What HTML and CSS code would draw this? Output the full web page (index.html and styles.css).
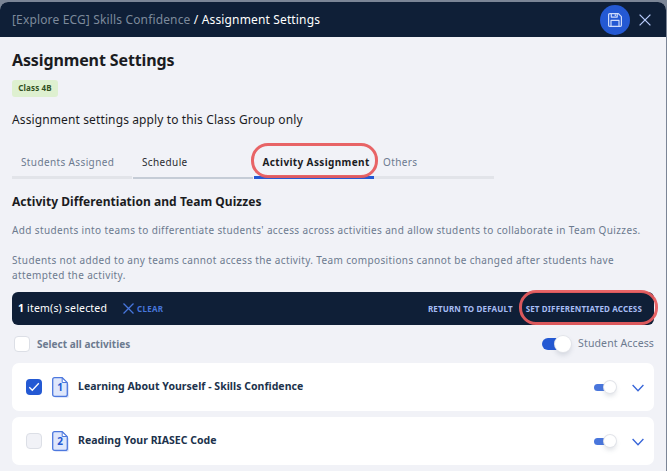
FILE: index.html
```html
<!DOCTYPE html>
<html lang="en">
<head>
<meta charset="utf-8">
<title>Assignment Settings</title>
<link rel="stylesheet" href="styles.css">
</head>
<body>
<div class="modal">
  <header class="topbar">
    <div class="crumbs"><span class="crumb-parent">[Explore ECG] Skills Confidence</span> / Assignment Settings</div>
    <button class="save" aria-label="Save">
      <svg width="14" height="14" viewBox="0 0 14 14" fill="none" stroke="#cfdcfb" stroke-width="1.2" stroke-linejoin="round"><path d="M1.8.6H10.4L13.4 3.6V12.2Q13.4 13.4 12.2 13.4H1.8Q.6 13.4.6 12.2V1.8Q.6.6 1.8.6Z"/><path d="M3.3.8V4.1H9.2V.8M7.3 1.2V3M3 13.2V7.4H11V13.2"/></svg>
    </button>
    <button class="close" aria-label="Close">
      <svg width="12" height="12" viewBox="0 0 12 12" fill="none" stroke="#b3c6f7" stroke-width="1.3"><path d="M.6.6 11.4 11.4M11.4.6.6 11.4"/></svg>
    </button>
  </header>
  <main class="content">
    <h1 class="title">Assignment Settings</h1>
    <span class="badge">Class 4B</span>
    <p class="scope">Assignment settings apply to this Class Group only</p>
    <nav class="tabs">
      <a class="tab tab-students">Students Assigned</a>
      <a class="tab tab-hover">Schedule</a>
      <a class="tab tab-active">Activity Assignment<span class="ring ring-tab"></span></a>
      <a class="tab tab-others">Others</a>
    </nav>
    <h2 class="subtitle">Activity Differentiation and Team Quizzes</h2>
    <p class="note note-first">Add students into teams to differentiate students' access across activities and allow students to collaborate in Team Quizzes.</p>
    <p class="note note-second">Students not added to any teams cannot access the activity. Team compositions cannot be changed after students have<br>attempted the activity.</p>
    <div class="selection">
      <span class="count"><b>1</b> item(s) selected</span>
      <svg class="clear-icon" width="11" height="11" viewBox="0 0 11 11" fill="none" stroke="#4776dc" stroke-width="1.3"><path d="M.5.5 10.5 10.5M10.5.5.5 10.5"/></svg>
      <span class="clear">CLEAR</span>
      <span class="action action-return">RETURN TO DEFAULT</span>
      <span class="action action-access">SET DIFFERENTIATED ACCESS<span class="ring ring-access"></span></span>
    </div>
    <div class="select-all">
      <span class="check check-empty"></span>
      <span class="select-label">Select all activities</span>
      <span class="toggle toggle-large"></span>
      <span class="access-label">Student Access</span>
    </div>
    <section class="card">
      <span class="check check-on"><svg width="16" height="16" viewBox="0 0 16 16" fill="none" stroke="#fff" stroke-width="1.3"><path d="M3.3 8.2 6.3 11.2 12.8 4.3"/></svg></span>
      <svg class="doc" width="17" height="21" viewBox="0 0 17 21"><rect x="2" y="6" width="15" height="15" rx="2.5" fill="#dfe6fa"/><path d="M2.6.7H10.2L15.3 5.8V17.4Q15.3 19.4 13.3 19.4H2.6Q.7 19.4.7 17.4V2.6Q.7.7 2.6.7Z" fill="#dfe7fb" stroke="#4d78de" stroke-width="1.3"/><path d="M10.2 1V5.5H15Z" fill="#fff" stroke="#4d78de" stroke-width="1"/><text x="8" y="14.2" text-anchor="middle" class="doc-number">1</text></svg>
      <span class="card-title card-title-first">Learning About Yourself - Skills Confidence</span>
      <span class="toggle toggle-small"></span>
      <svg class="chevron" width="12" height="8" viewBox="0 0 12 8" fill="none" stroke="#3664d8" stroke-width="1.3"><path d="M.6 1 6 6.8 11.4 1"/></svg>
    </section>
    <section class="card">
      <span class="check check-disabled"></span>
      <svg class="doc" width="17" height="21" viewBox="0 0 17 21"><rect x="2" y="6" width="15" height="15" rx="2.5" fill="#dfe6fa"/><path d="M2.6.7H10.2L15.3 5.8V17.4Q15.3 19.4 13.3 19.4H2.6Q.7 19.4.7 17.4V2.6Q.7.7 2.6.7Z" fill="#dfe7fb" stroke="#4d78de" stroke-width="1.3"/><path d="M10.2 1V5.5H15Z" fill="#fff" stroke="#4d78de" stroke-width="1"/><text x="8" y="14.2" text-anchor="middle" class="doc-number">2</text></svg>
      <span class="card-title card-title-second">Reading Your RIASEC Code</span>
      <span class="toggle toggle-small"></span>
      <svg class="chevron" width="12" height="8" viewBox="0 0 12 8" fill="none" stroke="#3664d8" stroke-width="1.3"><path d="M.6 1 6 6.8 11.4 1"/></svg>
    </section>
  </main>
</div>
</body>
</html>
```
FILE: styles.css
```css
* { box-sizing: border-box; }
body {
  margin: 0;
  height: 471px;
  overflow: hidden;
  padding: 2px 1px 0 0;
  background: #7b8596;
  color: #1b1c1f;
  font-family: "Noto Sans", sans-serif;
  white-space: nowrap;
}
h1, h2, p { margin: 0; }
button { padding: 0; border: 0; background: none; display: flex; align-items: center; justify-content: center; }
svg { flex: none; display: block; }
.modal { height: 469px; background: #f1f2f7; border-radius: 8px 8px 0 0; overflow: hidden; }
.topbar { height: 35px; background: #0f1f37; display: flex; align-items: center; padding: 0 15px 0 12px; }
.crumbs { flex: 1; font-size: 12px; line-height: 20px; letter-spacing: .15px; color: #fff; }
.crumb-parent { color: #7d8a9b; }
.save { width: 30px; height: 30px; border-radius: 50%; background: #2459d3; margin-right: 9px; }
.close { width: 12px; height: 12px; }
.content { padding: 13px 12px 0; }
.title { font-size: 16px; line-height: 20px; letter-spacing: -.12px; font-weight: 700; }
.badge { display: block; width: 46px; height: 17px; margin-top: 10px; border-radius: 3px; background: #def0d0; color: #32501f; font-size: 8px; letter-spacing: .15px; line-height: 16px; font-weight: 700; text-align: center; }
.scope { margin-top: 13px; font-size: 12px; line-height: 20px; letter-spacing: .12px; }
.tabs { display: flex; margin-top: 16px; height: 33px; width: 482px; }
.tab { position: relative; width: 120px; padding-left: 9px; font-size: 10px; line-height: 32px; letter-spacing: .37px; color: #6c7a8f; border-bottom: 3px solid #e2e4e9; }
.tab-hover { margin: 0 1px; color: #292b2f; border-bottom: 2px solid #c5ccd6; }
.tab-active { color: #1b1c1f; font-weight: 700; border-color: #2459d3; padding-left: 8.5px; }
.ring { position: absolute; border: 3px solid #e75c5ef2; border-radius: 17px; }
.ring-tab { left: -3.5px; top: -3px; width: 127px; height: 35px; }
.subtitle { margin-top: 13px; font-size: 12px; line-height: 20px; letter-spacing: .04px; font-weight: 700; }
.note { font-size: 10px; line-height: 15px; letter-spacing: .367px; color: #6c7a8f; }
.note-first { margin-top: 11px; }
.note-second { margin-top: 15px; }
.selection { display: flex; align-items: center; height: 33px; margin-top: 9px; padding: 0 12px 0 6px; border-radius: 6px; background: #0f1f37; }
.count { width: 105px; padding-bottom: 1px; color: #fff; font-size: 10.5px; letter-spacing: .18px; }
.clear { flex: 1; margin-left: 3px; color: #4776dc; font-size: 8px; letter-spacing: .3px; font-weight: 700; }
.action { padding-bottom: 1px; color: #a7bdf5; font-size: 8px; letter-spacing: .15px; font-weight: 700; }
.action-access { position: relative; margin-left: 13px; }
.ring-access { left: -7px; top: -13px; width: 139px; height: 35px; }
.select-all { display: flex; align-items: center; height: 38px; padding-left: 2px; }
.check { flex: none; width: 16px; height: 16px; border-radius: 4px; border: 1px solid #dcdfe6; background: #fff; }
.select-label { flex: 1; margin-left: 7px; font-size: 10px; letter-spacing: .03px; font-weight: 700; color: #6c7a8f; }
.access-label { margin-left: 6px; padding-bottom: 2px; font-size: 10.5px; letter-spacing: .12px; color: #6c7a8f; }
.card { display: flex; align-items: center; height: 48px; margin-bottom: 6px; padding: 0 10px 0 14px; border-radius: 7px; background: #fff; }
.check-on { border: 0; background: #2459d3; }
.check-disabled { background: #f1f2f7; }
.doc { margin-left: 10px; }
.doc-number { font-size: 10px; font-weight: 700; fill: #2459d3; }
.card-title { flex: 1; margin-left: 9px; padding-bottom: 2px; font-size: 10.5px; letter-spacing: .03px; line-height: 20px; font-weight: 700; color: #20324c; }
.chevron { margin-top: 2px; }
.toggle { position: relative; flex: none; border-radius: 8px; background: #2459d3; }
.toggle::after { content: ""; position: absolute; border-radius: 50%; background: #fff; box-shadow: 0 0 0 1px #e2e4e9, 0 3px 5px #52617a33; }
.toggle-large { width: 24px; height: 12px; margin-right: 6px; }
.toggle-large::after { width: 16px; height: 16px; left: 13px; top: -2px; }
.toggle-small { width: 20px; height: 7px; background: #4976dc; margin-right: 18px; }
.toggle-small::after { width: 12px; height: 12px; left: 10px; top: -3px; }
```
